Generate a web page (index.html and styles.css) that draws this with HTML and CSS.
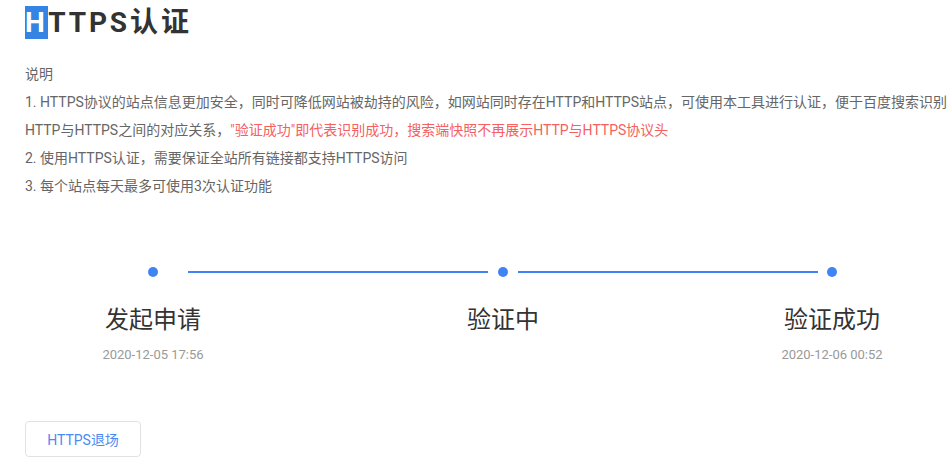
FILE: index.html
```html
<!DOCTYPE html>
<html lang="zh">
<head>
<meta charset="utf-8">
<title>HTTPS认证</title>
<link rel="stylesheet" href="styles.css">
</head>
<body>
<div class="page">
  <h1 class="title"><span class="sel">H</span>TTPS认证</h1>
  <div class="desc">
    <p>说明</p>
    <p>1. HTTPS协议的站点信息更加安全，同时可降低网站被劫持的风险，如网站同时存在HTTP和HTTPS站点，可使用本工具进行认证，便于百度搜索识别</p>
    <p>HTTP与HTTPS之间的对应关系，<span class="red">"验证成功"即代表识别成功，搜索端快照不再展示HTTP与HTTPS协议头</span></p>
    <p>2. 使用HTTPS认证，需要保证全站所有链接都支持HTTPS访问</p>
    <p>3. 每个站点每天最多可使用3次认证功能</p>
  </div>
  <div class="steps">
    <div class="track">
      <span class="dot d1"></span>
      <span class="line l1"></span>
      <span class="dot d2"></span>
      <span class="line l2"></span>
      <span class="dot d3"></span>
    </div>
    <div class="labels">
      <div class="step s1">
        <div class="name">发起申请</div>
        <div class="time">2020-12-05 17:56</div>
      </div>
      <div class="step s2">
        <div class="name">验证中</div>
        <div class="time"></div>
      </div>
      <div class="step s3">
        <div class="name">验证成功</div>
        <div class="time">2020-12-06 00:52</div>
      </div>
    </div>
  </div>
  <button class="btn" type="button">HTTPS退场</button>
</div>
</body>
</html>
```
FILE: styles.css
```css
html, body {
  margin: 0;
  padding: 0;
  background: #fff;
  overflow: hidden;
}
body {
  font-family: Roboto, "Noto Sans CJK SC", sans-serif;
  width: 949px;
  height: 468px;
}
.page {
  padding: 2px 0 0 25px;
}
.title {
  margin: 0;
  font-size: 28px;
  font-weight: 700;
  line-height: 42px;
  letter-spacing: 2.9px;
  color: #333;
}
.sel {
  background: #3584e4;
  color: #fff;
  padding-right: 0.5px;
}
.desc {
  margin-top: 16px;
  font-size: 14px;
  line-height: 28px;
  color: #666;
  white-space: nowrap;
}
.desc p {
  margin: 0;
}
.red {
  color: #f56060;
}
.steps {
  margin-top: 66px;
}
.track {
  display: flex;
  align-items: center;
  height: 11px;
}
.dot {
  width: 10px;
  height: 10px;
  border-radius: 50%;
  background: #3f84f5;
  flex: none;
}
.line {
  height: 2px;
  width: 300px;
  background: #3f84f5;
  flex: none;
}
.d1 { margin-left: 123px; }
.l1 { margin-left: 30px; }
.d2 { margin-left: 10px; }
.l2 { margin-left: 10px; }
.d3 { margin-left: 9px; }
.labels {
  display: flex;
  margin-top: 26px;
}
.step {
  width: 200px;
  text-align: center;
  flex: none;
}
.s1 { margin-left: 28px; }
.s2 { margin-left: 150px; }
.s3 { margin-left: 129px; }
.name {
  font-size: 24px;
  line-height: 34px;
  color: #333;
}
.time {
  margin-top: 8px;
  height: 20px;
  font-size: 13px;
  line-height: 20px;
  color: #999;
}
.btn {
  display: block;
  margin-top: 56px;
  width: 116px;
  height: 36px;
  padding: 0;
  border: 1px solid #e2e2e2;
  border-radius: 4px;
  background: #fff;
  font-family: Roboto, "Noto Sans CJK SC", sans-serif;
  font-size: 14px;
  color: #4a8af4;
}
```
